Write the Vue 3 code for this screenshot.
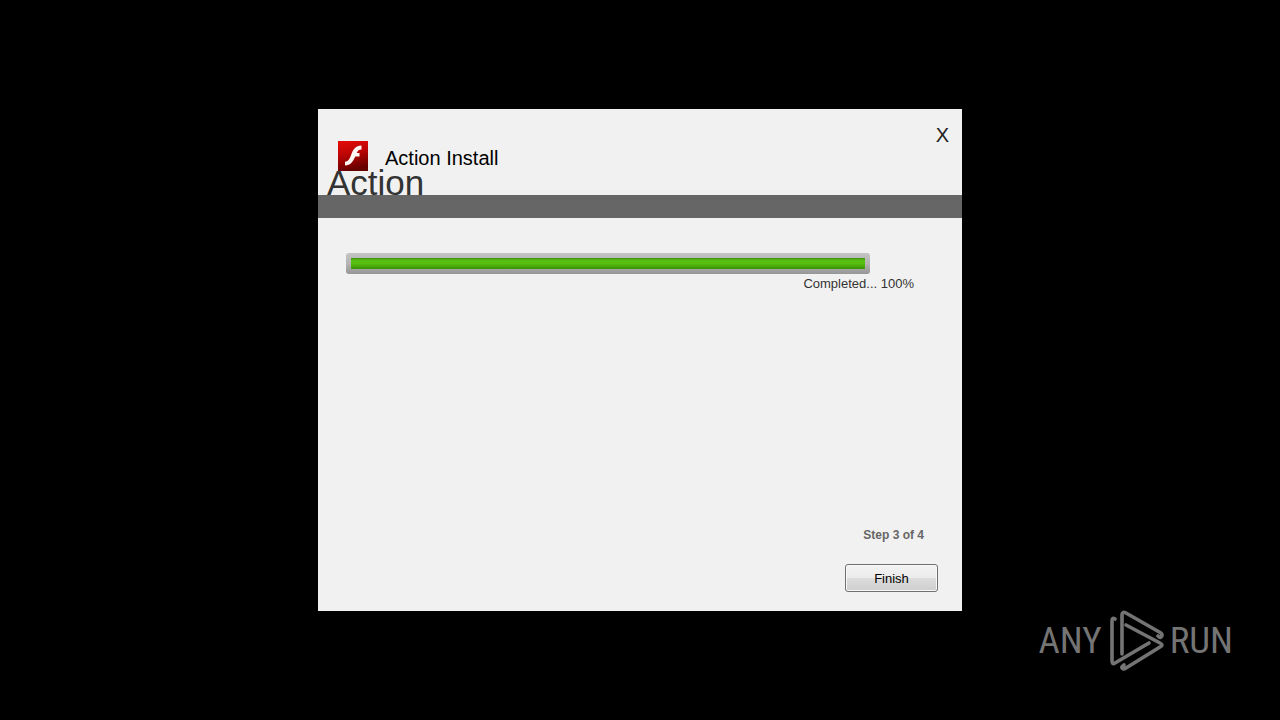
<script setup>
const progress = 100
const step = 3
const steps = 4
</script>

<template>
  <main class="desktop">
    <section class="dialog" aria-labelledby="dialog-title">
      <header class="header">
        <div class="top">
          <div class="product">
            <svg class="flash" viewBox="0 0 30 30" aria-hidden="true">
              <defs>
                <linearGradient id="red" x1="0" y1="0" x2="0.25" y2="1">
                  <stop offset="0" stop-color="#e80c0a" />
                  <stop offset="0.5" stop-color="#b90504" />
                  <stop offset="1" stop-color="#690000" />
                </linearGradient>
              </defs>
              <rect width="30" height="30" fill="url(#red)" />
              <path
                d="M23.5 4.500V8.500C20.800 8.400 19.500 10 18.700 12H21.500V15.500H17.200C15.100 20.500 12.700 24.300 7 24.500V20.700C10.800 20.300 12 17 13.300 13.400C15 8.600 17.500 4.500 23.500 4.500Z"
                fill="#fff7f3"
              />
            </svg>
            <h1 id="dialog-title" class="name">Action Install</h1>
          </div>
          <button class="close" type="button" aria-label="Close">X</button>
        </div>
        <h2 class="heading">Action</h2>
      </header>
      <div class="band"></div>
      <div class="body">
        <div class="track" role="progressbar" aria-labelledby="status" :aria-valuenow="progress">
          <div class="fill" :style="{ width: progress + '%' }"></div>
        </div>
        <p id="status" class="status">Completed... {{ progress }}%</p>
        <footer class="footer">
          <p class="step">Step {{ step }} of {{ steps }}</p>
          <button class="finish" type="button">Finish</button>
        </footer>
      </div>
    </section>

    <div class="watermark">
      <span class="word">ANY</span>
      <svg class="play" viewBox="0 0 56 64" aria-hidden="true">
        <g fill="none" stroke="#747474" stroke-width="3.6" stroke-linecap="round" stroke-linejoin="round">
          <path d="M7 10Q4 8 4 12V52Q4 56 7 54L41 34" />
          <path d="M14 45V6Q14 2 18 4L53 24Q55 26 53 28Q52 29 50 27" />
          <path d="M18 16L52 34Q56 36 52 38L18 59Q15 61 14 59Q13 58 16 56" />
        </g>
      </svg>
      <span class="word">RUN</span>
    </div>
  </main>
</template>

<style>
body {
  background: #000;
}
</style>

<style scoped>
.desktop {
  position: relative;
  display: flex;
  align-items: center;
  justify-content: center;
  min-height: 100vh;
  background: #000;
  font-family: "Liberation Sans", Arial, sans-serif;
}

h1,
h2,
p {
  margin: 0;
  font-weight: 400;
}

.dialog {
  display: flex;
  flex-direction: column;
  width: 100%;
  max-width: 644px;
  min-height: 502px;
  background: #f1f1f1;
}

.header {
  padding: 14px 13px 0 9px;
}

.top {
  display: flex;
  justify-content: space-between;
  align-items: flex-start;
}

.product {
  display: flex;
  align-items: center;
  gap: 17px;
  padding: 18px 0 0 11px;
}

.flash {
  width: 30px;
  height: 30px;
}

.name {
  font-size: 20px;
  line-height: 24px;
  padding-top: 4px;
  color: #000;
}

.close {
  padding: 0;
  border: 0;
  background: none;
  font: 20px/24px "Liberation Sans", Arial, sans-serif;
  color: #222;
}

.heading {
  font-size: 35px;
  line-height: 24px;
  color: #333;
}

.band {
  height: 23px;
  background: #666;
}

.body {
  display: flex;
  flex: 1;
  flex-direction: column;
  padding: 35px 24px 19px 28px;
}

.track {
  box-sizing: border-box;
  width: 100%;
  max-width: 524px;
  height: 21px;
  padding: 5px;
  border-radius: 3px;
  background: linear-gradient(#c4c4c4, #b4b4b4 50%, #969696);
}

.fill {
  height: 11px;
  background: linear-gradient(#388d0c, #59bd14 20%, #57bf0e 50%, #399208);
}

.status {
  align-self: flex-end;
  padding-right: 24px;
  font-size: 13px;
  line-height: 20px;
  color: #333;
}

.footer {
  display: flex;
  flex-direction: column;
  align-items: flex-end;
  gap: 20px;
  margin-top: auto;
}

.step {
  padding-right: 14px;
  font-size: 12px;
  line-height: 18px;
  font-weight: 700;
  color: #666;
}

.finish {
  width: 93px;
  height: 28px;
  padding: 2px 0 0;
  border: 1px solid #707070;
  border-radius: 3px;
  background: linear-gradient(#f3f3f3, #ebebeb 50%, #dcdcdc 50%, #cecece);
  box-shadow: inset 0 0 0 1px #f8f8f8;
  font: 13px/16px "Liberation Sans", Arial, sans-serif;
  color: #000;
}

.watermark {
  position: absolute;
  right: 47px;
  bottom: 47px;
  display: flex;
  align-items: center;
  gap: 6px;
  color: #747474;
}

.play {
  width: 56px;
  height: 64px;
}

.word {
  font-family: "Liberation Sans Narrow", "Roboto Condensed", "Liberation Sans", sans-serif;
  font-size: 37px;
  line-height: 48px;
}
</style>
